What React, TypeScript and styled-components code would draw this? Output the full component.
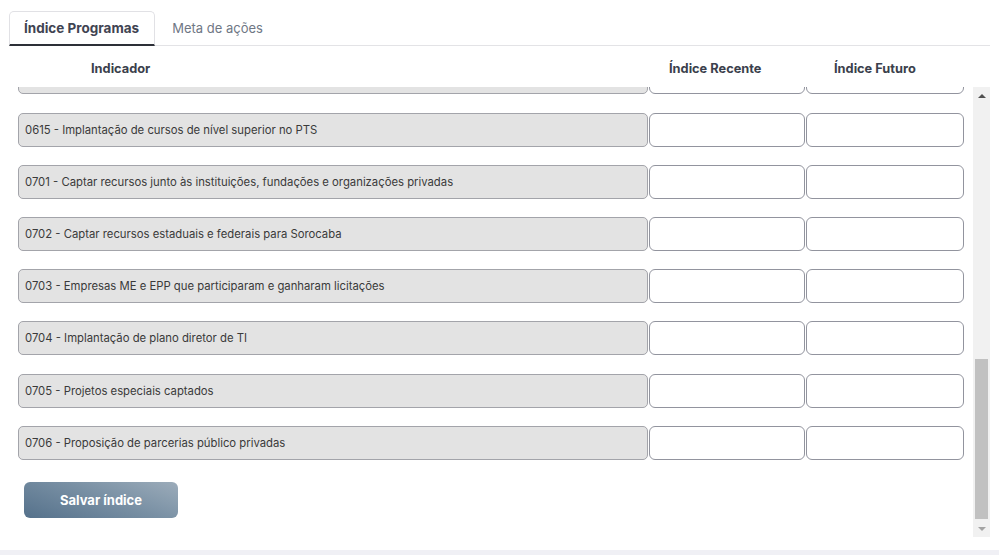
import React, { useLayoutEffect, useRef } from "react"
import styled, { createGlobalStyle } from "styled-components"

const GlobalStyle = createGlobalStyle`
html, body {
  margin:0;
  padding:0;
  background:#f0f0f5;
  font-family:Inter, "Noto Sans", "Liberation Sans", sans-serif;
}
*{box-sizing:border-box;}
`

const indicadores = [
  "0601 - Modernização da gestão administrativa",
  "0602 - Capacitação de servidores municipais",
  "0603 - Digitalização de processos internos",
  "0604 - Atendimento ao cidadão",
  "0605 - Ampliação da arrecadação própria",
  "0606 - Revisão da planta genérica de valores",
  "0607 - Transparência e acesso à informação",
  "0608 - Controle interno e auditoria",
  "0609 - Gestão de contratos e convênios",
  "0610 - Redução de despesas de custeio",
  "0611 - Qualificação profissional",
  "0612 - Programa de estágios",
  "0613 - Parcerias com instituições de ensino",
  "0614 - Fomento à inovação tecnológica",
  "0615 - Implantação de cursos de nível superior no PTS",
  "0701 - Captar recursos junto às instituições, fundações e organizações privadas",
  "0702 - Captar recursos estaduais e federais para Sorocaba",
  "0703 - Empresas ME e EPP que participaram e ganharam licitações",
  "0704 - Implantação de plano diretor de TI",
  "0705 - Projetos especiais captados",
  "0706 - Proposição de parcerias público privadas",
]

const App: React.FC = () => {
  const scrollRef = useRef<HTMLDivElement>(null)

  useLayoutEffect(() => {
    const el = scrollRef.current
    if (el) el.scrollTop = el.scrollHeight
  }, [])

  return (
    <>
      <GlobalStyle />
      <Card>
        <TabBar>
          <Tab $active>Índice Programas</Tab>
          <Tab>Meta de ações</Tab>
        </TabBar>
        <Body>
          <HeadRow>
            <Head $pad={73}>Indicador</Head>
            <Head $pad={20}>Índice Recente</Head>
            <Head $pad={28}>Índice Futuro</Head>
          </HeadRow>
          <ScrollArea>
            <Scroller ref={scrollRef}>
              <List>
                {indicadores.map((txt) => (
                  <Row key={txt}>
                    <Label>{txt}</Label>
                    <Field type="text" />
                    <Field type="text" />
                  </Row>
                ))}
              </List>
              <SaveButton>Salvar índice</SaveButton>
            </Scroller>
            <Track>
              <Arrow $dir="up" />
              <Thumb />
              <Arrow $dir="down" />
            </Track>
          </ScrollArea>
        </Body>
      </Card>
    </>
  )
}

const Card = styled.div`
background:#fff;
height:550px;
padding:11px 9px 0 9px;
`

const TabBar = styled.div`
display:flex;
align-items:flex-end;
border-bottom:1px solid #e3e3e6;
`

const Tab = styled.div<{ $active?: boolean }>`
height:35px;
display:flex;
align-items:center;
padding:${(p) => (p.$active ? "0 15px 1px 14px" : "0 16px 3px 16px")};
font-size:${(p) => (p.$active ? "13.5px" : "13px")};
font-weight:${(p) => (p.$active ? 700 : 400)};
color:${(p) => (p.$active ? "#3f4452" : "#6f7785")};
border:1px solid ${(p) => (p.$active ? "#e1e1e5" : "transparent")};
border-bottom:${(p) => (p.$active ? "2px solid #2d3038" : "none")};
border-radius:5px 5px 0 0;
margin-bottom:-1px;
`

const Body = styled.div`
padding-left:9px;
`

const HeadRow = styled.div`
display:grid;
grid-template-columns:630px 156px 158px;
column-gap:1px;
height:41px;
align-items:center;
padding-top:3px;
`

const Head = styled.div<{ $pad: number }>`
padding-left:${(p) => p.$pad}px;
font-size:12.8px;
font-weight:700;
color:#3b3f4c;
`

const ScrollArea = styled.div`
display:flex;
height:450px;
`

const Scroller = styled.div`
width:956px;
overflow:hidden;
`

const Track = styled.div`
width:17px;
background:#f1f1f1;
display:flex;
flex-direction:column;
justify-content:space-between;
align-items:center;
`

const Thumb = styled.div`
width:13px;
height:160px;
margin-top:auto;
margin-bottom:1px;
background:#c1c1c1;
`

const Arrow = styled.div<{ $dir: "up" | "down" }>`
width:17px;
height:17px;
display:flex;
align-items:center;
justify-content:center;
&::before {
  content:"";
  border-left:4px solid transparent;
  border-right:4px solid transparent;
  ${(p) =>
    p.$dir === "up"
      ? "border-bottom:4px solid #505050;"
      : "border-top:4px solid #a3a3a3;"}
}
`

const List = styled.div`
display:flex;
flex-direction:column;
gap:18.2px;
padding-top:8px;
`

const Row = styled.div`
display:grid;
grid-template-columns:630px 156px 158px;
column-gap:1px;
height:34px;
`

const Label = styled.div`
display:flex;
align-items:center;
padding-left:6px;
background:#e3e3e3;
border:1px solid #a3a4aa;
border-radius:5px;
font-size:11.3px;
color:#3a3a3a;
white-space:nowrap;
overflow:hidden;
`

const Field = styled.input`
height:34px;
border:1px solid #92949e;
border-radius:6px;
background:#fff;
outline:none;
padding:0 8px;
`

const SaveButton = styled.button`
display:block;
margin:22px 0 19px 6px;
width:154px;
height:36px;
border:none;
border-radius:6px;
background:linear-gradient(20deg, #55718b 0%, #7990a4 55%, #9cacba 100%);
color:#fff;
font-family:inherit;
font-size:13px;
font-weight:700;
`

export default App
